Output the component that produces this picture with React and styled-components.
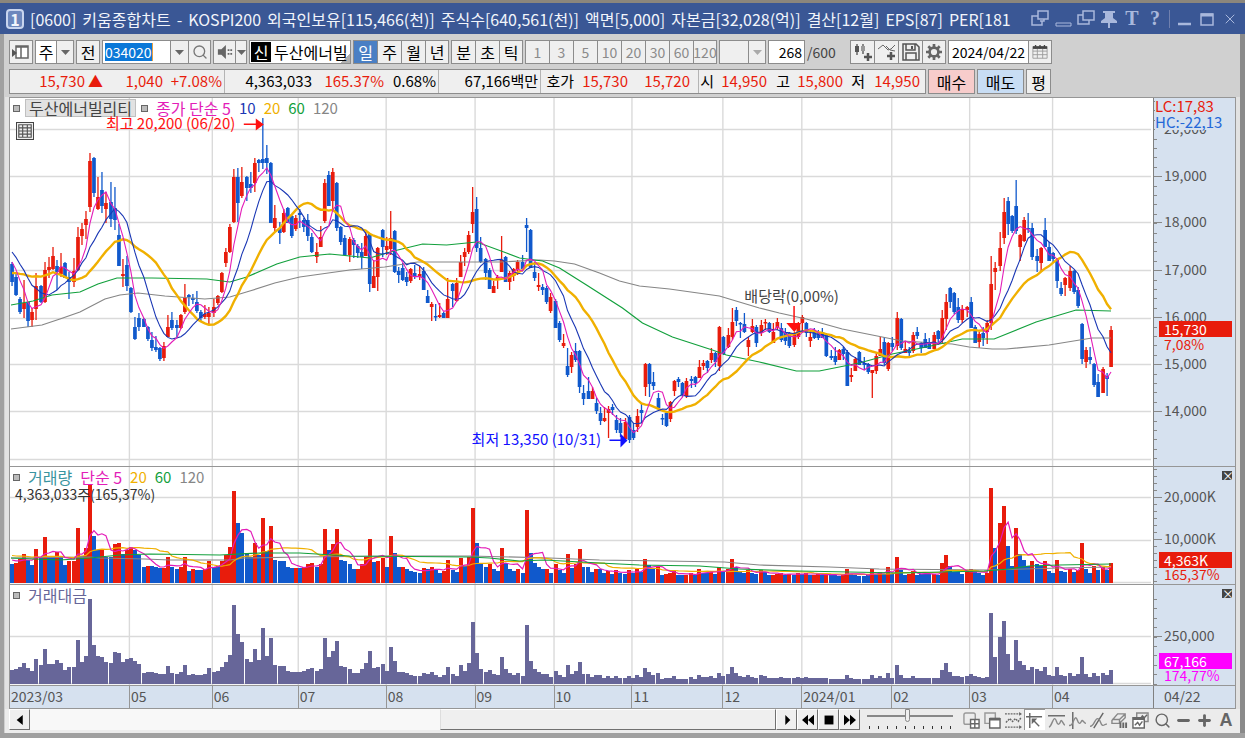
import { Search, Minus, Plus, X } from "lucide-react";
import styled, { createGlobalStyle } from "styled-components";

/* ---------- data ---------- */

// one candle per day: r = up, b = down, then high, body top, body bottom, low (chart y)
const CANDLES = `
b262,264,282,286 b272,277,295,296 b297,299,312,314 r280,303,309,318 b302,302,321,327 r308,312,320,327
r273,286,309,320 b285,286,302,303 r262,270,302,303 r257,267,270,278 r247,256,269,270 b260,266,272,290
r253,267,274,277 b262,263,278,278 b272,277,282,299 r258,271,282,287 r227,237,270,271 r223,229,236,245
r211,219,225,239 r153,161,207,212 b157,158,193,197 r177,197,209,210 b172,190,206,213 r192,203,209,223
b182,202,219,227 b187,208,220,230 b224,235,266,266 r259,274,276,287 b256,265,286,291 b287,288,312,313
b317,327,339,340 b313,318,327,331 b318,319,327,327 b326,327,339,341 b332,340,348,351 b336,347,350,352
b347,348,359,361 r342,346,358,361 r315,327,337,337 b312,320,328,330 b320,325,328,337 r314,315,328,329
r284,298,312,314 b294,295,297,306 b294,298,300,304 b291,302,311,313 b310,312,318,322 r305,314,317,319
r307,313,317,324 r299,307,313,317 r295,296,303,305 r272,273,292,293 r248,252,263,267 r224,227,252,253
r169,177,222,223 b168,177,203,222 r167,182,196,198 b176,177,188,201 b172,184,188,193 r158,163,183,192
b159,160,163,172 b118,159,163,169 b145,158,163,174 b162,163,223,223 r205,218,228,232 b222,228,233,244
r209,213,232,233 b207,208,223,223 b215,216,236,238 r215,218,229,231 b209,213,215,228 b218,220,227,232
b214,220,236,241 b233,237,252,253 r243,252,257,263 r226,237,247,247 r179,183,221,223 b171,175,206,206
r168,172,201,210 b182,183,228,231 b226,227,242,245 b235,238,255,255 r237,239,255,262 b238,240,245,258
b244,246,253,258 b243,252,257,269 r232,236,256,256 b233,234,284,292 r260,276,288,288 r247,248,277,291
b229,230,247,257 r237,246,250,255 r211,238,249,255 b230,231,272,273 b267,271,275,283 b263,268,280,281
b272,277,282,286 r268,269,281,283 b265,273,277,279 r266,274,277,280 b267,271,290,290 b290,296,303,303
r302,304,307,321 b304,316,317,321 r303,315,317,318 b312,313,318,318 r278,299,318,318 b283,284,291,307
r278,283,301,302 r255,262,277,277 r248,252,257,266 r231,235,252,254 r187,212,224,233 b197,209,248,252
b237,248,262,263 b258,259,273,280 b268,270,289,289 r281,286,293,293 r275,277,280,289 r236,260,272,272
b256,257,282,282 r271,273,282,290 r268,269,276,281 r260,262,270,275 b255,262,269,269 b218,225,228,252
b229,230,268,268 b262,272,278,281 r273,285,287,291 b284,287,290,295 b286,288,302,304 r293,297,311,313
b299,301,328,328 b321,323,340,342 r334,343,346,348 b348,366,375,377 r352,355,367,373 b343,351,360,362
b350,351,387,393 b385,393,399,405 b377,391,399,399 r387,391,399,399 b398,403,411,414 b407,413,421,425
r407,418,421,422 r406,409,413,438 b404,407,410,415 b415,420,430,433 b418,423,433,437 r418,422,439,442
b415,417,440,443 b423,430,438,440 r409,416,427,432 b403,410,413,423 r363,364,387,396 b363,364,384,397
b372,382,386,390 b393,398,408,410 b414,418,419,425 b412,413,426,427 r401,402,419,422 r380,381,391,396
b377,379,382,387 b382,383,395,397 r378,381,396,398 b376,379,381,388 b376,377,383,387 r360,367,378,378
r360,363,366,370 b360,361,368,373 r348,353,360,363 b352,353,362,367 r326,327,366,371 b336,337,354,355
r328,335,347,348 r308,322,337,340 b307,310,321,326 b322,323,324,338 b313,324,332,333 r337,340,347,356
r319,326,332,333 b325,327,343,347 r320,325,333,336 r319,322,323,330 b322,323,332,333 r323,332,343,343
r318,322,328,330 b323,328,340,342 b328,332,341,345 b332,333,346,348 r332,334,345,347 r322,323,337,339
r315,317,323,333 b322,323,333,337 r330,337,341,347 b328,332,338,339 b330,332,338,340 b328,332,338,338
b333,335,356,357 b350,356,358,360 b347,356,362,365 r349,350,360,360 b347,349,354,360 b350,352,386,386
r368,375,377,382 r357,359,371,371 b351,352,365,365 b357,363,365,370 b363,364,372,374 r370,370,373,398
r352,356,371,374 r337,349,356,356 b337,342,363,365 r342,343,369,371 b337,343,347,351 r312,318,346,350
b318,319,348,350 r342,349,353,353 b347,351,353,357 r332,335,351,353 b327,332,336,339 b342,343,348,353
b333,339,348,348 b338,342,349,349 r332,335,349,349 b330,331,339,345 r310,318,340,343 r294,302,319,330
b287,288,302,308 b292,293,312,314 b298,307,320,323 r305,309,320,323 r306,307,310,317 b297,302,328,328
b325,327,343,343 r332,334,342,348 b327,333,338,346 r320,323,332,344 r256,284,323,330 r262,268,272,290
r232,248,266,271 r198,212,238,244 b197,201,224,235 b215,216,231,233 b180,206,231,234 r234,235,247,261
r217,220,241,242 b213,228,229,233 b223,228,257,260 b249,256,261,272 r247,248,263,271 b218,230,247,247
b242,247,261,261 b252,253,259,262 b258,260,281,288 b282,288,294,296 r277,278,285,296 r266,271,288,291
b270,271,292,294 b287,290,306,308 b323,324,359,364 r347,350,362,368 b347,357,360,364 b363,364,385,387
b374,382,397,397 r367,369,393,393 b373,376,379,396 r326,330,367,367`
  .trim()
  .split(/\s+/)
  .map((c) => {
    const [high, top, bottom, low] = c.slice(1).split(",").map(Number);
    const up = c[0] === "r";
    return { up, high, top, bottom, low, close: up ? top : bottom };
  });

// bar colour and height
const VOLUMES = `
b19 r20 r24 r29 b23 b18 r34 b26 r46 b26 b26 r31 b27 b18 r22 r22 r55 b27 r35 r98 b47 b33 r33 b26 b26 r39 r40
b29 r33 r36 b33 b28 b16 r17 b17 b16 b15 r15 r26 b16 b14 r16 r26 b12 r14 b13 b13 r14 r22 b16 b17 r22 r28 r36
r92 b60 b50 b30 b26 r40 b28 r65 b32 r57 b23 b22 b22 b16 b15 r15 b15 r16 r19 r20 b16 r19 r54 b33 r39 r54 b23
b22 b19 b14 r14 r19 r26 r44 b21 r22 r25 b16 r47 b30 b16 r16 b14 b12 b11 b10 r15 b14 r16 b13 b10 r12 r23 b13
b11 r25 b17 r26 r75 b40 b19 b16 r19 b14 b12 r35 b20 b14 b12 r14 b10 r73 b30 b20 b16 b14 r14 b10 r19 b13 b10
r29 b15 r19 r34 b16 b16 b11 r14 b14 b10 r12 b9 r13 b10 b9 r13 b10 r14 b11 r24 b18 b14 r17 b8 r9 r10 r12 b8
b8 r8 r10 b8 r14 b10 b10 r12 b9 r16 b11 r14 r24 b16 b11 b10 r13 b10 b9 r13 b11 b8 r8 r9 r10 b8 r9 b8 r10 b9
r10 b8 r8 r9 b8 r9 b8 b8 b7 r8 r14 b9 b8 b7 b7 b8 r14 b9 r11 b9 r16 b9 r26 b13 b8 r9 r12 b8 b9 b9 b9 r9 b8
r20 r28 b17 b11 b11 b9 r11 r14 b11 b10 b8 r10 r95 b35 r60 r77 b37 b17 r55 b29 b23 b17 r22 b19 b17 r22 b12
b10 r23 b12 b11 r14 b11 r13 r40 b14 b10 r17 b13 r16 b13 r20`
  .trim()
  .split(/\s+/)
  .map((v) => ({ up: v[0] === "r", size: Number(v.slice(1)) }));

const MA60 = "11,305 33,301 52,295 80,292 98,284 117,278 152,278 207,279 230,282 247,277 277,264 300,257 330,254 370,258 394,251 423,244 447,245 477,242 507,253 520,258 543,261 560,268 587,285 623,308 643,323 673,337 713,350 727,355 760,362 797,371 820,371 860,363 893,354 927,347 963,339 995,339 1037,322 1077,310 1112,311";
const MA120 = "11,329 42,325 60,319 80,312 105,299 120,295 138,293 165,296 205,299 230,297 250,291 275,283 300,277 350,270 385,267 418,262 500,262 540,260 555,261 575,264 600,273 620,281 640,286 670,289 720,296 760,308 780,313 807,319 843,329 873,335 903,341 953,344 970,347 993,349 1007,349 1050,345 1093,338 1112,338";
const VMA60 = "11,558 60,560 90,558 120,555 150,554 220,555 260,553 300,553 350,556 470,557 490,558 520,561 545,560 600,563 640,565 700,566 740,569 800,571 900,573 985,571 1010,569 1030,566 1060,565 1112,564";
const VMA120 = "11,558 90,557 100,558 145,559 170,560 230,560 245,558 300,557 400,556 470,556 550,558 600,560 665,561 725,562 760,565 830,567 880,569 990,570 1060,568 1112,567";

const MONTHS = [
  ["2023/03", 10, 129], ["05", 129, 212], ["06", 212, 298], ["07", 298, 386], ["08", 386, 475], ["09", 475, 554],
  ["10", 554, 632], ["11", 632, 723], ["12", 723, 802], ["2024/01", 802, 892], ["02", 892, 970], ["03", 970, 1053],
  ["04", 1053, 1154],
];

const LEFT = 10;
const WIDTH = 1144;
const PRICE = { top: 98, height: 368 };
const VOLUME = { top: 467, height: 117, base: 583 };
const AMOUNT = { top: 585, height: 100, base: 684 };

const RED = "#e81c0c";
const BLUE = "#1059cc";

const barX = (i) => Math.round(11.7 + i * 4.12);
const priceAt = (y) => 19000 - (y - 176) / 0.0471;
const percent = (part, whole) => `${(part / whole) * 100}%`;

function average(values, seed, days) {
  const all = [...seed, ...values];
  return values.map((_, i) => {
    const end = i + seed.length + 1;
    const part = all.slice(end - days, end);
    return part.reduce((a, b) => a + b, 0) / days;
  });
}

const toPoints = (ys) => ys.map((y, i) => `${barX(i)},${y.toFixed(1)}`).join(" ");

const closes = CANDLES.map((c) => c.close);
const closeSeed = [...Array(10).fill(294), ...Array(5).fill(242), ...Array(4).fill(257)];
const sizes = VOLUMES.map((v) => v.size);
const sizeSeed = [...Array(15).fill(29), ...Array(4).fill(24)];
const volumeY = (days) => toPoints(average(sizes, sizeSeed, days).map((v) => VOLUME.base - v));

/* ---------- chart drawings ---------- */

function Grid({ lines, pane }) {
  return (
    <g stroke="#dadada" strokeWidth="1.4">
      {MONTHS.slice(1).map(([label, x]) => (
        <line key={label} x1={x + 0.5} x2={x + 0.5} y1={pane.top} y2={pane.top + pane.height} />
      ))}
      {lines.map((y) => <line key={y} x1="10" x2="1152" y1={y + 0.5} y2={y + 0.5} />)}
    </g>
  );
}

function Plot({ pane, children }) {
  return (
    <PlotSvg viewBox={`${LEFT} ${pane.top} ${WIDTH} ${pane.height}`} preserveAspectRatio="none">
      {children}
    </PlotSvg>
  );
}

function PricePlot() {
  return (
    <Plot pane={PRICE}>
      <Grid pane={PRICE} lines={[129, 176, 222, 270, 318, 364, 411, 459]} />
      {CANDLES.map((c, i) => (
        <g key={i} fill={c.up ? RED : BLUE}>
          <rect x={barX(i) - 0.6} y={c.high} width="1.3" height={Math.max(c.low - c.high, 1)} />
          <rect x={barX(i) - 1.8} y={c.top} width="3.7" height={Math.max(c.bottom - c.top, 1.5)} />
        </g>
      ))}
      <g fill="none">
        <polyline points={MA120} stroke="#868686" strokeWidth="1.2" />
        <polyline points={MA60} stroke="#12a03c" strokeWidth="1.2" />
        <polyline points={toPoints(average(closes, closeSeed, 20))} stroke="#f0b000" strokeWidth="2.4" />
        <polyline points={toPoints(average(closes, closeSeed, 10))} stroke="#1a37b4" strokeWidth="1.1" />
        <polyline points={toPoints(average(closes, closeSeed, 5))} stroke="#e31db8" strokeWidth="1.1" />
      </g>
      <path d="M244 123.500h12v-5l8 6l-8 6v-5.500h-12z" fill="#f11" />
      <path d="M610 439.500h11v-6l7 7l-7 7v-6.500h-11z" fill="#11f" />
      <path d="M794 306h1.500v17h6.500l-7 9l-8-9h7z" fill="#f11" />
    </Plot>
  );
}

function VolumePlot() {
  return (
    <Plot pane={VOLUME}>
      <Grid pane={VOLUME} lines={[497, 540, 582]} />
      <g shapeRendering="crispEdges">
        {VOLUMES.map((v, i) => (
          <rect key={i} x={barX(i) - 2} y={VOLUME.base - v.size} width="4" height={v.size} fill={v.up ? RED : BLUE} />
        ))}
      </g>
      <g fill="none" strokeWidth="1.2">
        <polyline points={VMA120} stroke="#868686" />
        <polyline points={volumeY(20)} stroke="#f0b000" />
        <polyline points={volumeY(5)} stroke="#e31db8" />
        <polyline points={VMA60} stroke="#12a03c" />
      </g>
    </Plot>
  );
}

function AmountPlot() {
  return (
    <Plot pane={AMOUNT}>
      <Grid pane={AMOUNT} lines={[636, 683]} />
      <g fill="#676699" shapeRendering="crispEdges">
        {VOLUMES.map((v, i) => {
          const h = Math.round(v.size * priceAt(closes[i]) * 0.000045);
          return <rect key={i} x={barX(i) - 2} y={AMOUNT.base - h} width="4" height={h} />;
        })}
      </g>
    </Plot>
  );
}

function PlotNote({ x, y, color, children }) {
  const style = { left: percent(x - LEFT, WIDTH), top: percent(y - PRICE.top, PRICE.height) };
  return <Note $c={color} style={style}>{children}</Note>;
}

function Axis({ pane, labels, step, from, children }) {
  const ticks = [];
  for (let y = from; y < pane.top + pane.height; y += step) if (y > pane.top) ticks.push(y);
  const place = (y) => ({ top: percent(y - pane.top, pane.height) });
  return (
    <AxisBox>
      {ticks.map((y) => <Tick key={y} style={place(y)} />)}
      {labels.map(([text, y]) => (
        <AxisLabel key={text} style={place(y)}>{text}</AxisLabel>
      ))}
      {children(place)}
    </AxisBox>
  );
}

/* ---------- small icons ---------- */

const Icon = ({ size = 18, color = "#666", w = 1.5, children }) => (
  <svg width={size} height={size} viewBox="0 0 18 18" fill="none" stroke={color} strokeWidth={w}>{children}</svg>
);

const Caret = ({ color = "#666" }) => (
  <svg width="9" height="5" viewBox="0 0 9 5"><path d="M0 0h9L4.500 5z" fill={color} /></svg>
);

const TOOL_ICONS = [
  ["새 창", <><rect x="1" y="1" width="12" height="12" rx="2" stroke="#999" /><path d="M8 8h9v9H8zM12.500 8v9M8 12.500h9" fill="#fff" /></>],
  ["겹치기", <><path d="M1 1h11v11H1z" stroke="#999" /><path d="M6 7h11v10H6z" fill="#fff" /><path d="M6 7.500h11" strokeWidth="3" /></>],
  ["영역", <><path d="M0 2h16M0 16h16" strokeDasharray="2 1" /><path d="M1 11l4-4 3 3 3-3 3 3 3-4" strokeDasharray="2 1" /><path d="M15 0l3 2-3 2zM15 14l3 2-3 2z" fill="#666" stroke="none" /></>],
  ["추세선", <><path d="M0 5h17M4 1v16M8 9l6 6" /><path d="M6 7h6l-6 6z" fill="#666" stroke="none" /></>],
  ["수평선", <><path d="M0 4h18" /><path d="M1 16c3-1 4-9 6-9s2 6 4 6 2-4 3-4 2 4 4 5" stroke="#888" /></>],
  ["수직선", <><path d="M4 0v18" /><path d="M0 14c4 2 5-8 7-8s2 6 4 6 2-3 3-3 2 3 4 3" stroke="#888" /></>],
  ["자유선", <><path d="M4 17L14 1" /><path d="M0 15c4 1 5-8 8-8s3 6 5 7 3-2 5-1" stroke="#888" /></>],
  ["지우개", <><path d="M1 9l6-7h8v4l-6 6H1zM1 8h8l6-6M9 8v4" stroke="#888" /><path d="M10 11v6M13 11v6M16 11v6" strokeWidth="2" /></>],
  ["차트", <><path d="M5 1h12v9H5z" stroke="#888" /><path d="M1 6h12v11H1z" fill="#fff" /><path d="M1 7h12" strokeWidth="3" /><path d="M3 14l3-3 2 3 3-4M9 7l2-3 2 2 3-3" /></>],
];

const TITLE = [
  "[0600]", "키움종합차트", "-", "KOSPI200", "외국인보유[115,466(천)]", "주식수[640,561(천)]", "액면[5,000]",
  "자본금[32,028(억)]", "결산[12월]", "EPS[87]", "PER[181",
];
const GROUPS = [["일", "주", "월", "년"], ["분", "초", "틱"]];
const MINUTES = ["1", "3", "5", "10", "20", "30", "60", "120"];

/* ---------- page ---------- */

export default function App() {
  return (
    <>
      <Global />
      <Window>
        <TitleBar>
          <Badge>1</Badge>
          <h1>{TITLE.map((part) => <span key={part}>{part}</span>)}</h1>
          <TitleTools>
            <button aria-label="화면 분리"><Icon color="#a9b8dc"><path d="M7 1h10v8H7zM13 9v2H9M7 6H1v9h10v-4" /></Icon></button>
            <button aria-label="접기"><Icon color="#a9b8dc"><path d="M2 13h15v3H2z" strokeWidth="1" /></Icon></button>
            <button aria-label="복사"><Icon color="#a9b8dc"><path d="M6 1h11v9H6zM6 5H1v9h11v-4" /></Icon></button>
            <button aria-label="고정"><Icon><path d="M3 1h12v2h-2v5l4 3v2h-7v5H8v-5H1v-2l4-3V3H3z" fill="#a9b8dc" stroke="none" /></Icon></button>
            <button aria-label="글꼴"><Serif>T</Serif></button>
            <button aria-label="도움말"><Serif>?</Serif></button>
            <Divider />
            <button aria-label="최소화"><Icon color="#a9b8dc" w={2.5}><path d="M3 14h13" /></Icon></button>
            <button aria-label="최대화"><Icon color="#a9b8dc"><path d="M3 4h12v11H3z" /><path d="M3 5h12" strokeWidth="3" /></Icon></button>
            <button aria-label="닫기"><X size={16} strokeWidth={1.5} /></button>
          </TitleTools>
        </TitleBar>

        <Body>
          <Toolbar>
            <Group>
              <Tool aria-label="메뉴"><Icon><path d="M4 3h12v12H4zM4 4h12M9 4v11" fill="#fff" /><path d="M0 6l5 4-5 4z" fill="#555" stroke="none" /></Icon></Tool>
            </Group>
            <Group>
              <Cell $w={21}>주</Cell>
              <Tool $w={18} aria-label="종목 구분"><Caret /></Tool>
            </Group>
            <Group><Tool>전</Tool></Group>
            <Group>
              <CodeBox><input aria-label="종목코드" defaultValue="034020" /></CodeBox>
              <Tool $w={18} aria-label="최근 종목"><Caret /></Tool>
              <Tool $w={23} aria-label="검색"><Search size={16} color="#777" /></Tool>
            </Group>
            <Group>
              <Tool $w={22} aria-label="소리"><Icon size={16}><path d="M1 6h4l5-5v16l-5-5H1z" fill="#666" stroke="none" /><path d="M12 7h5M12 11h5" strokeWidth="2" strokeDasharray="2 1" /></Icon></Tool>
              <Tool $w={12} aria-label="소리 설정"><Caret /></Tool>
            </Group>
            <NameBox><b>신</b>두산에너빌</NameBox>
            {GROUPS.map((g) => (
              <Group key={g[0]}>
                {g.map((t) => <Tool key={t} $on={t === "일"}>{t}</Tool>)}
              </Group>
            ))}
            <Group>{MINUTES.map((m) => <Tool key={m} $dim>{m}</Tool>)}</Group>
            <Group>
              <Tool $w={29} $dim aria-label="분 설정" />
              <Tool $w={18} $dim aria-label="분 목록"><Caret color="#aaa" /></Tool>
            </Group>
            <Group><CountBox aria-label="조회 개수" defaultValue="268" /></Group>
            <Total>/600</Total>
            <Group>
              <Tool aria-label="봉 추가"><Icon><path d="M3 1v11M9 1v10" /><path d="M1 3h4v6H1z" fill="#555" stroke="none" /><path d="M7 3h4v5H7z" fill="#999" stroke="none" /><path d="M14 10v8M10 14h8" stroke="#555" strokeWidth="2.5" /></Icon></Tool>
              <Tool aria-label="지표 추가"><Icon><path d="M0 6l5-4 5 5 3-1 4-4M8 3l4 4 5 1" strokeWidth="1" /><path d="M13 9v8M9 13h8" stroke="#555" strokeWidth="2.5" /></Icon></Tool>
              <Tool aria-label="저장"><Icon color="#555"><path d="M1 1h13l3 3v13H1zM4 1v6h9V1M4 17v-7h10v7" /><path d="M10 3v3" strokeWidth="2" /></Icon></Tool>
              <Tool aria-label="설정"><Icon size={16}><circle cx="9" cy="9" r="5" strokeWidth="3" /><path d="M9 0v4M9 14v4M0 9h4M14 9h4M2.600 2.600l3 3M12.400 12.400l3 3M15.400 2.600l-3 3M5.600 12.400l-3 3" strokeWidth="3" /></Icon></Tool>
            </Group>
            <Group>
              <DateBox aria-label="기준일" defaultValue="2024/04/22" />
              <Tool aria-label="달력"><Icon size={16}><path d="M1 3h16v13H1zM1 8h16M1 12h16M6 5v11M12 5v11" stroke="#999" strokeWidth="1" /><path d="M1 4h16" strokeWidth="3" stroke="#444" /><path d="M4 1v4M9 1v4M14 1v4" stroke="#444" /></Icon></Tool>
            </Group>
          </Toolbar>

          <QuoteRow>
            <Quotes>
              <Quote $cols="74px 18px 60px 59px"><Up>15,730</Up><Up>▲</Up><Up>1,040</Up><Up>+7.08%</Up></Quote>
              <Quote $cols="86px 72px 52px"><span>4,363,033</span><Up>165.37%</Up><span>0.68%</span></Quote>
              <Quote $cols="98px"><span>67,166백만</span></Quote>
              <Quote $cols="32px 54px 62px 6px"><span>호가</span><Up>15,730</Up><Up>15,720</Up></Quote>
              <Quote $cols="14px 53px 23px 53px 22px 55px 3px">
                <span>시</span><Up>14,950</Up><span>고</span><Up>15,800</Up><span>저</span><Up>14,950</Up>
              </Quote>
            </Quotes>
            <Order $w={47} $bg="#f7cccb">매수</Order>
            <Order $w={47} $bg="#c8ddf4">매도</Order>
            <Order $w={25} $bg="#efefef">평</Order>
          </QuoteRow>

          <Frame>
            <Pane $grow={369}>
              <PlotBox>
                <PricePlot />
                <Legend>
                  <Dot /><NameTag>두산에너빌리티</NameTag><Dot />
                  <Key $c="#e31db8">종가 단순 5</Key><Key $c="#1a37b4" $num>10</Key><Key $c="#f0b000" $num>20</Key>
                  <Key $c="#12a03c" $num>60</Key><Key $c="#868686" $num>120</Key>
                </Legend>
                <GridButton aria-label="데이터 표"><Icon size={14} color="#555"><path d="M1 1h16v16H1zM1 5h16M1 9h16M1 13h16M6 1v16M12 1v16" /></Icon></GridButton>
                <PlotNote color="#f11" x={106} y={124}>최고 20,200 (06/20)</PlotNote>
                <PlotNote color="#11f" x={472} y={440}>최저 13,350 (10/31)</PlotNote>
                <PlotNote color="#444" x={745} y={297}>배당락(0,00%)</PlotNote>
              </PlotBox>
              <Axis
                pane={PRICE} from={101} step={9.4}
                labels={[["20,000", 129], ["19,000", 176], ["18,000", 222], ["17,000", 270], ["16,000", 317], ["15,000", 364], ["14,000", 411]]}
              >
                {(place) => (
                  <>
                    <Extremes><Up>LC:17,83</Up><Down>HC:-22,13</Down></Extremes>
                    <Current style={place(329)}>15,730</Current>
                    <Rate style={place(345)}>7,08%</Rate>
                  </>
                )}
              </Axis>
            </Pane>

            <Pane $grow={118}>
              <PlotBox>
                <VolumePlot />
                <Legend>
                  <Dot /><Key $c="#3a94a0">거래량</Key><Key $c="#e31db8">단순 5</Key><Key $c="#f0b000" $num>20</Key>
                  <Key $c="#12a03c" $num>60</Key><Key $c="#868686" $num>120</Key>
                </Legend>
                <Summary>4,363,033주(165,37%)</Summary>
              </PlotBox>
              <Axis pane={VOLUME} from={469} step={7} labels={[["20,000K", 497], ["10,000K", 539]]}>
                {(place) => (
                  <>
                    <CloseButton aria-label="거래량 닫기">×</CloseButton>
                    <Current style={place(560)}>4,363K</Current>
                    <Rate style={place(575)}>165,37%</Rate>
                  </>
                )}
              </Axis>
            </Pane>

            <Pane $grow={101}>
              <PlotBox>
                <AmountPlot />
                <Legend><Dot /><Key $c="#676699">거래대금</Key></Legend>
              </PlotBox>
              <Axis pane={AMOUNT} from={599} step={9.4} labels={[["250,000", 636]]}>
                {(place) => (
                  <>
                    <CloseButton aria-label="거래대금 닫기">×</CloseButton>
                    <Current $c="#f0f" style={place(661)}>67,166</Current>
                    <Rate $c="#f0f" style={place(676)}>174,77%</Rate>
                  </>
                )}
              </Axis>
            </Pane>

            <Dates>
              <Months>{MONTHS.map(([m]) => <Month key={m}>{m}</Month>)}</Months>
              <Today>04/22</Today>
            </Dates>
          </Frame>

          <Bottom>
            <Raised aria-label="왼쪽으로"><Icon size={10} color="none"><path d="M14 0v18L3 9z" fill="#000" /></Icon></Raised>
            <Track><Thumb /></Track>
            <Raised aria-label="오른쪽으로"><Icon size={10} color="none"><path d="M6 0v18l9-9z" fill="#000" /></Icon></Raised>
            <Raised aria-label="뒤로"><Icon size={12} color="none"><path d="M9 1v16L0 9zM18 1v16L9 9z" fill="#000" /></Icon></Raised>
            <Raised aria-label="정지"><Icon size={10} color="none"><path d="M1 1h16v16H1z" fill="#000" /></Icon></Raised>
            <Raised aria-label="앞으로"><Icon size={12} color="none"><path d="M0 1v16l9-8zM9 1v16l9-8z" fill="#000" /></Icon></Raised>
            <Speed><input type="range" aria-label="속도" defaultValue="47" /></Speed>
            <Tools>
              {TOOL_ICONS.map(([name, art]) => (
                <ToolButton key={name} aria-label={name} $on={name === "추세선"}><Icon size={17}>{art}</Icon></ToolButton>
              ))}
              <ToolButton aria-label="확대경"><Search size={17} /></ToolButton>
              <ToolButton aria-label="축소"><Minus size={17} strokeWidth={4} /></ToolButton>
              <ToolButton aria-label="확대"><Plus size={17} strokeWidth={4} /></ToolButton>
              <ToolButton aria-label="자동"><b>A</b></ToolButton>
            </Tools>
          </Bottom>
        </Body>
      </Window>
    </>
  );
}

/* ---------- styles ---------- */

const Global = createGlobalStyle`
  * { box-sizing: border-box; }
  body { margin: 0; background: #a0a0a0; }
  body, button, input {
    font-family: "Noto Sans CJK KR", sans-serif;
    font-size: 16px;
    line-height: 16px;
  }
  button { padding: 0; border: 0; background: none; color: inherit; }
  svg { display: block; flex: none; }
`;

const Window = styled.div`
  min-height: 100vh;
  display: flex;
  flex-direction: column;
  border-top: 3px solid #8b867c;
  border-bottom: 5px solid #a0a0a0;
`;

const Body = styled.div`
  flex: 1;
  display: flex;
  flex-direction: column;
  border: solid #a0a0a0;
  border-width: 0 5px 0 4px;
  border-right-color: #8a8a8a;
  background: #d0d0d0;
`;

const TitleBar = styled.header`
  height: 31px;
  display: flex;
  align-items: center;
  padding: 0 6px;
  gap: 6px;
  background: #3a5795;
  color: #f2f5fb;
  white-space: nowrap;
  overflow: hidden;

  h1 {
    flex: 1;
    min-width: 0;
    display: flex;
    gap: 6px;
    overflow: hidden;
    margin: 0;
    font-size: 16px;
    font-weight: normal;
    line-height: 24px;
  }
`;

const Badge = styled.span`
  width: 18px;
  height: 20px;
  border: 2px solid #c8d4ee;
  border-radius: 4px;
  background: #6d87bd;
  text-align: center;
  font-weight: bold;
`;

const TitleTools = styled.div`
  display: flex;
  align-items: center;
  gap: 5px;
  color: #a9b8dc;

  button {
    width: 18px;
    display: flex;
    justify-content: center;
  }
`;

const Serif = styled.span`
  font: bold 20px "Liberation Serif", serif;
`;

const Divider = styled.i`
  width: 1px;
  height: 18px;
  background: #7080ae;
`;

const Toolbar = styled.div`
  display: flex;
  gap: 2px;
  padding: 6px 5px 5px;
  white-space: nowrap;
`;

const Group = styled.div`
  display: flex;
  flex: none;
  height: 24px;

  && > * {
    border: 1px solid #8c8c8c;
    border-right-width: 0;
  }

  && > :last-child { border-right-width: 1px; }
`;

const Tool = styled.button`
  width: ${(p) => p.$w || 24}px;
  flex: none;
  display: flex;
  align-items: center;
  justify-content: center;
  background: ${(p) => (p.$on ? "#4a7fc4" : "#efefef")};
  color: ${(p) => (p.$on ? "#fff" : p.$dim ? "#8a8a8a" : "#000")};
  font-size: ${(p) => (p.$dim ? 14 : 16)}px;
`;

const Cell = styled.span`
  width: ${(p) => p.$w}px;
  background: #fff;
  line-height: 22px;
  text-align: center;
`;

const CodeBox = styled.div`
  width: 68px;
  padding: 2px;
  background: #fff;

  input {
    display: block;
    width: 48px;
    height: 18px;
    padding: 0;
    border: 0;
    border-right: 1px solid #e8a040;
    background: #0a78d8;
    color: #fff;
    font-size: 14px;
  }
`;

const NameBox = styled.div`
  width: 102px;
  height: 24px;
  display: flex;
  gap: 3px;
  padding: 1px;
  overflow: hidden;
  border: 1px solid #8c8c8c;
  background: linear-gradient(135deg, #fff 92%, #b0b0b0 92%);
  line-height: 20px;

  b {
    width: 20px;
    flex: none;
    background: #000;
    color: #fff;
    font-weight: normal;
    text-align: center;
  }
`;

const CountBox = styled.input`
  width: 37px;
  padding: 0 2px;
  text-align: right;
  font-size: 14px;
`;

const Total = styled.span`
  width: 41px;
  line-height: 24px;
  color: #444;
  font-size: 14px;
`;

const DateBox = styled.input`
  width: 80px;
  padding: 0 3px;
  font-size: 14px;
`;

const QuoteRow = styled.div`
  display: flex;
  gap: 2px;
  padding: 0 5px 3px;
  white-space: nowrap;
`;

const Quotes = styled.div`
  display: flex;
  height: 25px;
  border: 1px solid #8c8c8c;
  background: #efefef;
`;

const Quote = styled.div`
  display: grid;
  grid-template-columns: ${(p) => p.$cols};
  padding: 0 2px 0 1px;
  font-size: 15px;
  line-height: 22px;
  text-align: right;

  & + & { border-left: 1px solid #b4b4b4; }
`;

const Up = styled.span`
  color: ${RED};
`;

const Down = styled.span`
  color: #2468d8;
`;

const Order = styled.button`
  width: ${(p) => p.$w}px;
  border: 1px solid #8c8c8c;
  background: ${(p) => p.$bg};
`;

const Frame = styled.main`
  flex: 1;
  display: flex;
  flex-direction: column;
  margin-left: 1px;
  padding: 0 4px;
  background: #e2e2e2;
`;

const Pane = styled.section`
  flex: ${(p) => p.$grow} 1 ${(p) => p.$grow}px;
  display: flex;
  border: 1px solid #969696;
  border-width: 0 1px 1px;

  &:first-child { border-top-width: 1px; flex-basis: 370px; }
`;

const PlotBox = styled.div`
  position: relative;
  flex: 1;
  min-width: 0;
  background: #fff;
  overflow: hidden;
`;

const PlotSvg = styled.svg`
  position: absolute;
  inset: 0;
  width: 100%;
  height: 100%;
`;

const Legend = styled.div`
  position: relative;
  display: flex;
  align-items: center;
  gap: 8px;
  padding: 2px 3px;
  height: 20px;
  white-space: nowrap;
`;

const Dot = styled.i`
  width: 7px;
  height: 7px;
  border: 1px solid #666;
  background: #bbb;
`;

const NameTag = styled.button`
  height: 18px;
  margin: 0 -3px;
  padding: 0 3px;
  border: 1px solid #c0c0c0;
  background: #e2e2e2;
  color: #444;
`;

const Key = styled.span`
  color: ${(p) => p.$c};
  font-size: ${(p) => (p.$num ? 15 : 16)}px;
`;

const GridButton = styled.button`
  position: absolute;
  left: 6px;
  top: 24px;
  padding: 1px;
  border: 1px solid #444;
  background: #eee;
`;

const Note = styled.span`
  position: absolute;
  margin-top: -9px;
  color: ${(p) => p.$c};
  font-size: 15px;
  white-space: nowrap;
`;

const Summary = styled.div`
  position: relative;
  padding-left: 5px;
  line-height: 14px;
  color: #333;
  font-size: 14px;
`;

const AxisBox = styled.aside`
  position: relative;
  width: 82px;
  flex: none;
  border-left: 1px solid #808080;
  background: #d6e1ef;
  overflow: hidden;
  font-size: 14px;
`;

const Tick = styled.i`
  position: absolute;
  left: 0;
  width: 3px;
  height: 1px;
  background: #888;
`;

const AxisLabel = styled.span`
  position: absolute;
  left: 0;
  margin-top: -9px;
  padding-left: 10px;
  background: linear-gradient(#888, #888) 0 9px / 8px 1px no-repeat;
  color: #555;
`;

const Extremes = styled.div`
  position: absolute;
  top: 0;
  left: 1px;
  right: 0;
  display: flex;
  flex-direction: column;
  background: #d6e1ef;
  font-size: 15px;
`;

const Current = styled.strong`
  position: absolute;
  left: 5px;
  right: 3px;
  margin-top: -8px;
  padding-left: 5px;
  background: ${(p) => p.$c || RED};
  color: #fff;
  font-weight: normal;
`;

const Rate = styled.span`
  position: absolute;
  left: 10px;
  margin-top: -9px;
  color: ${(p) => p.$c || RED};
`;

const CloseButton = styled.button`
  position: absolute;
  top: 4px;
  right: 3px;
  width: 10px;
  height: 9px;
  background: #444;
  color: #fff;
  font-size: 12px;
  line-height: 8px;
`;

const Dates = styled.div`
  display: flex;
  height: 23px;
  flex: none;
  border: 1px solid #969696;
  border-top: 0;
  background: #d6e1ef;
  color: #555;
  font-size: 14px;
  line-height: 20px;
`;

const Months = styled.div`
  flex: 1;
  display: grid;
  grid-template-columns: ${MONTHS.map(([, from, to]) => `${to - from}fr`).join(" ")};
`;

const Month = styled.span`
  min-width: 0;
  padding-left: 1px;

  & + & { border-left: 1px solid #969696; }
`;

const Today = styled.span`
  width: 82px;
  padding-left: 10px;
  border-left: 1px solid #808080;
`;

const Bottom = styled.footer`
  display: flex;
  height: 24px;
  padding: 0 4px 3px;
  margin-left: 1px;
  background: #ececec;
`;

const Raised = styled.button`
  width: 21px;
  flex: none;
  display: flex;
  align-items: center;
  justify-content: center;
  border: 1px solid;
  border-color: #fff #707070 #707070 #fff;
  background: #efefef;
`;

const Track = styled.div`
  flex: 1;
  display: flex;
  justify-content: flex-end;
  background: #f8f8f8;
`;

const Thumb = styled.div`
  width: 45%;
  border: 1px solid;
  border-color: #fff #707070 #707070 #ddd;
  background: #efefef;
`;

const Speed = styled.div`
  width: 100px;
  padding: 0 7px;
  background: repeating-linear-gradient(90deg, #333 0 1px, transparent 1px 9px) 9px 17px / 84px 3px no-repeat;

  input {
    width: 86px;
    height: 13px;
    margin: 0;
    display: block;
    appearance: none;
    background: linear-gradient(#888, #888) 0 6px / 100% 2px no-repeat;
  }

  input::-webkit-slider-thumb {
    appearance: none;
    width: 5px;
    height: 13px;
    border: 1px solid #888;
    border-radius: 0 0 3px 3px;
    background: #eee;
  }
`;

const Tools = styled.div`
  display: flex;
  width: 276px;
  color: #666;
`;

const ToolButton = styled.button`
  flex: 1;
  display: flex;
  align-items: center;
  justify-content: center;
  border: 1px solid ${(p) => (p.$on ? "#999" : "transparent")};
  border-width: 1px 0 0 1px;
  background: ${(p) => (p.$on ? "#fff" : "none")};

  b { font: bold 18px "Liberation Sans", sans-serif; }
`;
